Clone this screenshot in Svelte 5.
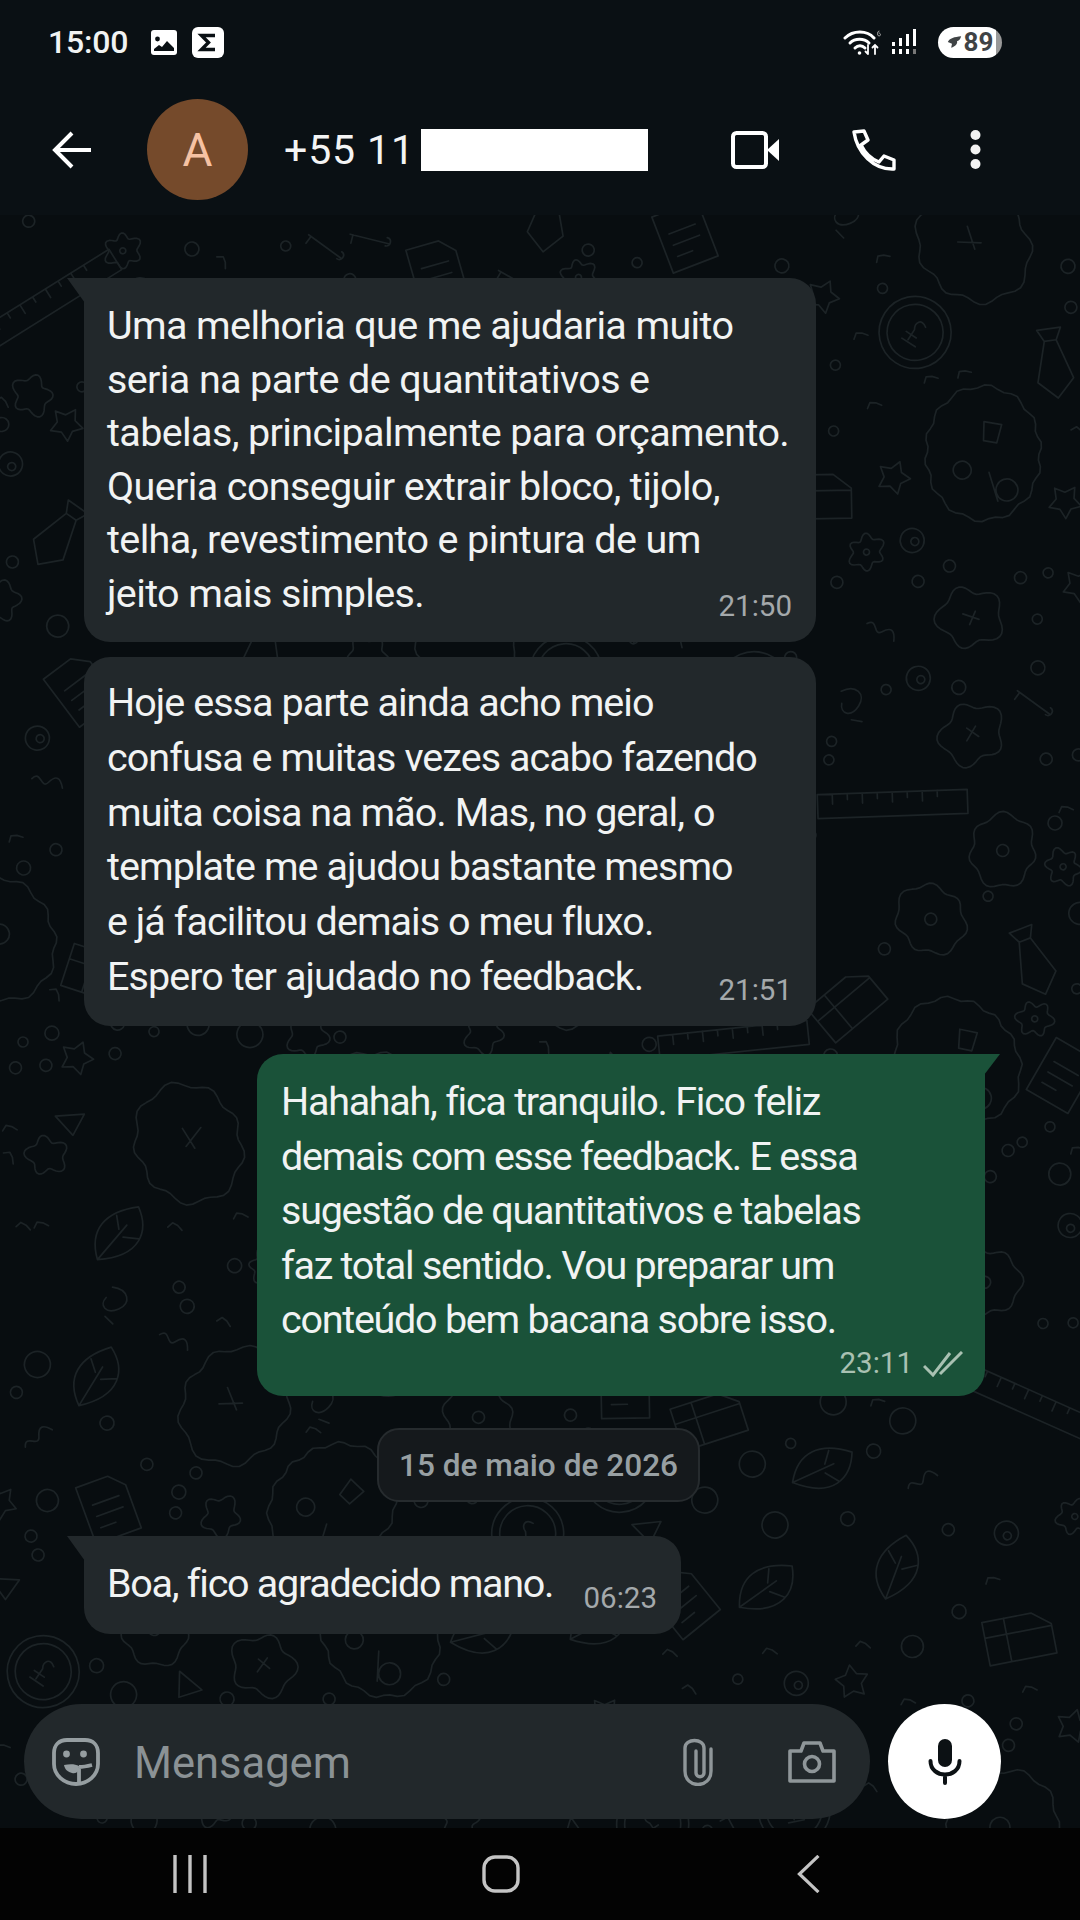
<script lang="ts">
  interface Message {
    lines: string[];
    time: string;
    out?: boolean;
    ticks?: boolean;
    cls: string;
  }

  const messages: Message[] = [
    {
      cls: 'm1',
      time: '21:50',
      lines: [
        'Uma melhoria que me ajudaria muito',
        'seria na parte de quantitativos e',
        'tabelas, principalmente para orçamento.',
        'Queria conseguir extrair bloco, tijolo,',
        'telha, revestimento e pintura de um',
        'jeito mais simples.'
      ]
    },
    {
      cls: 'm2',
      time: '21:51',
      lines: [
        'Hoje essa parte ainda acho meio',
        'confusa e muitas vezes acabo fazendo',
        'muita coisa na mão. Mas, no geral, o',
        'template me ajudou bastante mesmo',
        'e já facilitou demais o meu fluxo.',
        'Espero ter ajudado no feedback.'
      ]
    },
    {
      cls: 'm3',
      time: '23:11',
      out: true,
      ticks: true,
      lines: [
        'Hahahah, fica tranquilo. Fico feliz',
        'demais com esse feedback. E essa',
        'sugestão de quantitativos e tabelas',
        'faz total sentido. Vou preparar um',
        'conteúdo bem bacana sobre isso.'
      ]
    }
  ];

  // wallpaper doodles, scattered with a small seeded generator
  let seed = 11;
  function rnd() {
    seed = (seed * 16807) % 2147483647;
    return (seed - 1) / 2147483646;
  }

  function blob(r: number, lobes: number, amp: number) {
    const p1 = rnd() * 6;
    const p2 = rnd() * 6;
    let d = '';
    for (let i = 0; i <= 60; i++) {
      const a = (i / 60) * Math.PI * 2;
      const rr = r + Math.sin(a * lobes + p1) * amp + Math.sin(a * 2 + p2) * r * 0.08;
      d += (i ? 'L' : 'M') + (Math.cos(a) * rr).toFixed(1) + ' ' + (Math.sin(a) * rr).toFixed(1);
    }
    return d + 'Z';
  }

  function star(r: number) {
    let d = '';
    for (let i = 0; i < 10; i++) {
      const a = (i / 10) * Math.PI * 2;
      const rr = i % 2 ? r * 0.55 : r;
      d += (i ? 'L' : 'M') + (Math.cos(a) * rr).toFixed(1) + ' ' + (Math.sin(a) * rr).toFixed(1);
    }
    return d + 'Z';
  }

  const ring = (r: number, x = 0, y = 0) =>
    `M${x - r} ${y}a${r} ${r} 0 1 0 ${r * 2} 0a${r} ${r} 0 1 0 ${-r * 2} 0Z`;

  const big = [
    () => blob(62, 14, 2) + ring(9, -25, 10) + ring(11, 12, 42) + 'M10 -30l-6 18 12 6 10-16-8-4ZM0 20v30',
    () => blob(58, 11, 2.500) + ring(10, 0, -5),
    () => blob(56, 9, 3) + 'M-14 -8l22 8M0 -20v24',
    () => 'M-75 -12h150v24h-150ZM-60 -12v10M-45 -12v6M-30 -12v10M-15 -12v6M0 -12v10M15 -12v6M30 -12v10M45 -12v6'
  ];

  const medium = [
    () => blob(34, 7, 2.500) + ring(6),
    () => blob(30, 5, 4) + 'M-8 2l16-6M0 -8l4 14',
    () => ring(36) + ring(28) + 'M6 -10c-8 -6 -12 2 -8 8v12M-8 4h12M-8 12h16',
    () => 'M-12 -34h24l-6 12 12 40-18 18-18-18 12-40ZM-6 -22h12',
    () => 'M-34 -20h50l18 14v30h-68ZM-34 -4h68M-12 -20v44',
    () => 'M-30 24c-8 -30 8 -48 42 -52c10 24 2 50 -42 52ZM-30 24l30 -34M-8 -6l-2 -14M-4 2l16 2',
    () => 'M-24 -30h34l14 14v46h-48ZM-14 -8h28M-14 4h28M-14 16h16'
  ];

  const small = [
    () => blob(18, 5, 3.500),
    () => blob(16, 6, 3) + ring(3),
    () => star(17),
    () => ring(11),
    () => ring(13),
    () => 'M-16 5c6 -12 12 8 17 -2s10 -8 15 1',
    () => 'M-14 -10l28 8-18 16Z',
    () => 'M-14 -14l28 28M-18 -6l6 -6M10 14c4 4 10 -2 6 -6',
    () => ring(12) + ring(4, 2, 2),
    () => 'M-10 -16c16 -4 24 8 14 18s-20 4 -16 -6M-6 14l10 4'
  ];

  const tiny = [() => ring(7), () => ring(5), () => ring(6), () => 'M-7 -2l5 -4 5 3 4 5'];

  const doodles: { d: string; x: number; y: number; r: number; s: number }[] = [];
  const W = 1080;
  const H = 1620;

  function place(gens: (() => string)[], radius: number, tries: number) {
    for (let t = 0; t < tries; t++) {
      const x = rnd() * W;
      const y = rnd() * H;
      const clash = doodles.some((o) => Math.hypot(o.x - x, o.y - y) < o.s + radius);
      if (clash) continue;
      doodles.push({ d: gens[Math.floor(rnd() * gens.length)](), x, y, r: Math.floor(rnd() * 80 - 40), s: radius });
    }
  }

  place(big, 66, 24);
  place(medium, 38, 160);
  place(small, 20, 500);
  place(tiny, 8, 700);
</script>

<div class="phone">
  <div class="top">
    <div class="status">
      <span class="clock">15:00</span>
      <svg class="st-img" viewBox="0 0 26 25">
        <rect width="26" height="25" rx="3" fill="#fff" />
        <circle cx="6.500" cy="9" r="2.400" fill="#0a1014" />
        <path d="M3 21v-2l5-4 3 2 5-6 7 7v3z" fill="#0a1014" />
      </svg>
      <svg class="st-sigma" viewBox="0 0 32 31">
        <rect width="32" height="31" rx="6" fill="#fff" />
        <path d="M23 8.500H9.500l7 7-7 7H23" fill="none" stroke="#0a1014" stroke-width="3.400" />
      </svg>
      <span class="grow"></span>
      <svg class="st-wifi" viewBox="0 0 40 27" fill="none" stroke="#fff" stroke-linecap="round">
        <path d="M2 9c8-8 22-8 29 0" stroke-width="3" />
        <path d="M7 14c5-5 14-5 19 0" stroke-width="3" />
        <path d="M12 19c3-3 7-3 10 0" stroke-width="3" />
        <circle cx="16.500" cy="24" r="1.800" fill="#fff" stroke="none" />
        <path d="M25 16v9m-2.500-2.500L25 25M32 25v-9m-2.500 2.500L32 16l2.500 2.500" stroke-width="1.800" />
        <path d="M36 2c-2 0-2 5 0 5s2-3 0-3" stroke-width="1" stroke="#aaa" />
      </svg>
      <svg class="st-signal" viewBox="0 0 24 26" fill="#fff">
        <rect x="0" y="13" width="3" height="4" /><rect x="0" y="20" width="3" height="5" />
        <rect x="7" y="9" width="3" height="8" /><rect x="7" y="20" width="3" height="5" />
        <rect x="14" y="5" width="3" height="12" /><rect x="14" y="20" width="3" height="5" />
        <rect x="21" y="0" width="3" height="17" /><rect x="21" y="20" width="3" height="5" fill="#777" />
      </svg>
      <span class="battery">
        <svg viewBox="0 0 18 14"><path d="M1 7C3 2 9 1 17 0c-1 3-2 5-5 6 1 3-2 6-7 8l1-5-5-2z" fill="#3f4345" /></svg>
        89
      </span>
    </div>

    <header class="bar">
      <svg class="back" viewBox="0 0 40 38" fill="none" stroke="#fff" stroke-width="4">
        <path d="M39 19H3M20 2L3 19l17 17" />
      </svg>
      <div class="avatar">A</div>
      <div class="phone-no">+55 11</div>
      <div class="redact"></div>
      <span class="grow"></span>
      <svg class="i-video" viewBox="0 0 48 38">
        <rect x="2" y="2" width="33" height="34" rx="3.500" fill="none" stroke="#fff" stroke-width="4" />
        <path d="M36 19L48 8v22z" fill="#fff" />
      </svg>
      <svg class="i-call" viewBox="0 0 44 42" fill="none" stroke="#fff" stroke-width="3.400" stroke-linejoin="round">
        <path d="M2 3l10-1 4 9-7 5c4 8 10 14 18 17l5-6 10 4 0 9C22 41 5 24 2 3z" />
      </svg>
      <svg class="i-dots" viewBox="0 0 11 39" fill="#f2f2f2">
        <circle cx="5.500" cy="5" r="5" /><circle cx="5.500" cy="19.500" r="5" /><circle cx="5.500" cy="34" r="5" />
      </svg>
    </header>
  </div>

  <main class="chat">
    <svg class="wall" width="1080" height="1620" fill="none" stroke="#1c2326" stroke-width="1.700" stroke-linejoin="round" stroke-linecap="round">
      {#each doodles as o}
        <path d={o.d} transform="translate({o.x.toFixed(1)} {o.y.toFixed(1)}) rotate({o.r})" />
      {/each}
    </svg>

    <div class="list">
      {#each messages as m}
        <div class="bubble {m.cls}" class:out={m.out}>
          <div class="text">
            {#each m.lines as line}
              <div>{line}</div>
            {/each}
          </div>
          <div class="meta">
            {m.time}
            {#if m.ticks}
              <svg class="ticks" viewBox="0 0 40 26" fill="none" stroke="#a9c1b2" stroke-width="3">
                <path d="M1 15l9 9L27 2M17 23L39 1" />
              </svg>
            {/if}
          </div>
        </div>
      {/each}

      <div class="date">15 de maio de 2026</div>

      <div class="bubble m4">
        <div class="text"><div>Boa, fico agradecido mano.</div></div>
        <div class="meta">06:23</div>
      </div>
    </div>

    <div class="compose">
      <div class="input">
        <svg class="i-sticker" viewBox="0 0 48 48" fill="none" stroke="#969ea1" stroke-width="3.800">
          <path d="M15 2h18c8 0 13 5 13 13v11c0 11-10 20-22 20S2 37 2 26V15C2 7 7 2 15 2z" />
          <circle cx="14.500" cy="16" r="3.400" fill="#969ea1" stroke="none" />
          <circle cx="31.500" cy="16" r="3.400" fill="#969ea1" stroke="none" />
          <path d="M12 27c6-1 11-1 15 1 0 5-2 8-7 7-4-1-7-3-8-8z" fill="#969ea1" stroke="none" />
          <path d="M27 29c5 0 9-1 13-2M27 30v16" />
        </svg>
        <span class="placeholder">Mensagem</span>
        <span class="grow"></span>
        <svg class="i-clip" viewBox="0 0 30 48" fill="none" stroke="#8f9699" stroke-width="3.400" stroke-linecap="round">
          <path d="M28 11v22c0 18-26 18-26 0V10c0-10 19-10 19 0v25c0 5-8 5-8 0V13" />
        </svg>
        <svg class="i-camera" viewBox="0 0 48 42" fill="none" stroke="#8f9699" stroke-width="3.600" stroke-linejoin="round">
          <path d="M2 10h11l3-8h16l3 8h11v30H2z" />
          <circle cx="24" cy="23" r="7.500" />
        </svg>
      </div>
      <div class="mic">
        <svg viewBox="0 0 34 46" fill="none" stroke="#0c1114" stroke-width="4" stroke-linecap="round">
          <rect x="10" y="0" width="14" height="28" rx="7" fill="#0c1114" stroke="none" />
          <path d="M2.500 22c0 18 29 18 29 0M17 36v8" />
        </svg>
      </div>
    </div>
  </main>

  <nav class="nav">
    <svg class="n-recent" viewBox="0 0 36 38" stroke="#c4c4c4" stroke-width="3.400">
      <path d="M3 0v38M18 0v38M33 0v38" />
    </svg>
    <svg class="n-home" viewBox="0 0 38 38" fill="none" stroke="#c4c4c4" stroke-width="3.400">
      <rect x="2" y="2" width="34" height="34" rx="11" />
    </svg>
    <svg class="n-back" viewBox="0 0 24 40" fill="none" stroke="#c4c4c4" stroke-width="3.400">
      <path d="M23 1L3 20l20 19" />
    </svg>
  </nav>
</div>

<style>
  :global(body) {
    margin: 0;
    background: #000;
  }

  .phone {
    width: 1080px;
    height: 1920px;
    display: flex;
    flex-direction: column;
    overflow: hidden;
    font-family: Roboto, "Liberation Sans", sans-serif;
    color: #f1f3f3;
  }

  .grow {
    flex: 1;
  }

  .top {
    height: 215px;
    background: #0a1014;
    flex: none;
  }

  .status {
    height: 84px;
    display: flex;
    align-items: center;
    padding: 0 78px 0 48px;
    box-sizing: border-box;
  }

  .clock {
    font-size: 32px;
    font-weight: 500;
    margin-right: 23px;
    letter-spacing: -0.2px;
  }

  .st-img {
    width: 26px;
    height: 25px;
    margin-right: 15px;
  }

  .st-sigma {
    width: 32px;
    height: 31px;
  }

  .st-wifi {
    width: 40px;
    height: 27px;
    margin-right: 9px;
  }

  .st-signal {
    width: 24px;
    height: 26px;
    margin-right: 22px;
  }

  .battery {
    width: 64px;
    height: 31px;
    border-radius: 16px;
    background: linear-gradient(90deg, #fff 90%, #999 90%);
    color: #3f4345;
    font-size: 26px;
    font-weight: 700;
    display: flex;
    align-items: center;
    justify-content: center;
    gap: 2px;
    box-sizing: border-box;
  }

  .battery svg {
    width: 15px;
    height: 12px;
  }

  .bar {
    height: 131px;
    display: flex;
    align-items: center;
    padding: 0 99px 0 52px;
    box-sizing: border-box;
  }

  .back {
    width: 40px;
    height: 38px;
    margin-right: 55px;
  }

  .avatar {
    width: 101px;
    height: 101px;
    border-radius: 50%;
    background: #754a2b;
    color: #f6c2a3;
    font-size: 46px;
    display: flex;
    align-items: center;
    justify-content: center;
    margin-right: 36px;
  }

  .phone-no {
    font-size: 41px;
    letter-spacing: 0.900px;
    margin-right: 6px;
    color: #f4f4f4;
  }

  .redact {
    width: 227px;
    height: 42px;
    background: #fff;
  }

  .i-video {
    width: 48px;
    height: 38px;
    margin-right: 73px;
  }

  .i-call {
    width: 44px;
    height: 42px;
    margin-right: 74px;
  }

  .i-dots {
    width: 11px;
    height: 39px;
  }

  .chat {
    flex: 1;
    position: relative;
    background: #080d10;
    overflow: hidden;
    display: flex;
    flex-direction: column;
  }

  .wall {
    position: absolute;
    top: 0;
    left: 0;
  }

  .list {
    position: relative;
    flex: 1;
    padding-top: 63px;
    display: flex;
    flex-direction: column;
    align-items: flex-start;
  }

  .bubble {
    position: relative;
    margin-left: 84px;
    box-sizing: border-box;
    background: #22282b;
    border-radius: 0 26px 26px 26px;
    padding: 21px 0 0 23px;
    font-size: 39.500px;
    display: grid;
    grid-template-columns: 1fr auto;
  }

  .bubble::before {
    content: "";
    position: absolute;
    top: 0;
    left: -17px;
    width: 18px;
    height: 25px;
    background: inherit;
    clip-path: polygon(0 0, 100% 0, 100% 100%);
  }

  .text {
    grid-area: 1 / 1 / 2 / 3;
  }

  .meta {
    grid-area: 1 / 2 / 2 / 3;
    align-self: end;
    display: flex;
    align-items: center;
    gap: 12px;
    color: #a4a9ab;
    font-size: 29.500px;
    padding: 0 24px 8px 0;
  }

  .m1 {
    width: 732px;
    height: 364px;
    line-height: 53.600px;
    letter-spacing: -0.620px;
  }

  .m2 {
    width: 732px;
    height: 369px;
    margin-top: 15px;
    padding-top: 19px;
    border-radius: 26px;
    line-height: 54.800px;
    letter-spacing: -0.950px;
  }

  .m2::before {
    display: none;
  }

  .m3 {
    width: 728px;
    height: 342px;
    margin: 28px 0 0 257px;
    padding-left: 24px;
    line-height: 54.600px;
    letter-spacing: -1.260px;
    background: #1a5239;
    border-radius: 26px 0 26px 26px;
  }

  .m3::before {
    left: auto;
    right: -15px;
    width: 16px;
    height: 21px;
    clip-path: polygon(0 0, 100% 0, 0 100%);
  }

  .m3 .meta {
    color: #a9c1b2;
    gap: 10px;
    padding: 0 22px 5px 0;
    letter-spacing: 0;
  }

  .ticks {
    width: 40px;
    height: 26px;
  }

  .date {
    align-self: center;
    margin: 32px 0 0 -3px;
    height: 74px;
    box-sizing: border-box;
    display: flex;
    align-items: center;
    padding: 0 20px;
    border-radius: 22px;
    background: #15191c;
    border: 2px solid #262b2e;
    color: #98a0a3;
    font-size: 31.600px;
    font-weight: 500;
  }

  .m4 {
    width: 597px;
    height: 98px;
    margin-top: 34px;
    padding-top: 20px;
    line-height: 56px;
    letter-spacing: -1.270px;
  }

  .m1 .meta,
  .m2 .meta,
  .m4 .meta {
    letter-spacing: 0;
  }

  .compose {
    position: relative;
    flex: none;
    display: flex;
    gap: 18px;
    padding: 0 79px 9px 24px;
  }

  .input {
    flex: 1;
    height: 115px;
    border-radius: 58px;
    background: #22282b;
    display: flex;
    align-items: center;
    padding: 0 34px 0 28px;
  }

  .i-sticker {
    width: 48px;
    height: 48px;
    margin-right: 34px;
  }

  .placeholder {
    font-size: 43.500px;
    color: #8b9295;
    padding-top: 4px;
  }

  .i-clip {
    width: 30px;
    height: 48px;
    margin-right: 75px;
  }

  .i-camera {
    width: 48px;
    height: 42px;
  }

  .mic {
    width: 113px;
    height: 115px;
    border-radius: 50%;
    background: #fff;
    display: flex;
    align-items: center;
    justify-content: center;
  }

  .mic svg {
    width: 34px;
    height: 46px;
  }

  .nav {
    height: 92px;
    flex: none;
    background: #030303;
    position: relative;
    display: grid;
    grid-template-columns: 172px 36px 274px 38px 276px 24px;
    align-items: center;
  }

  .nav svg {
    display: block;
    height: 38px;
  }

  .n-recent {
    grid-column: 2;
    width: 36px;
  }

  .n-home {
    grid-column: 4;
    width: 38px;
  }

  .n-back {
    grid-column: 6;
    width: 24px;
  }
</style>
